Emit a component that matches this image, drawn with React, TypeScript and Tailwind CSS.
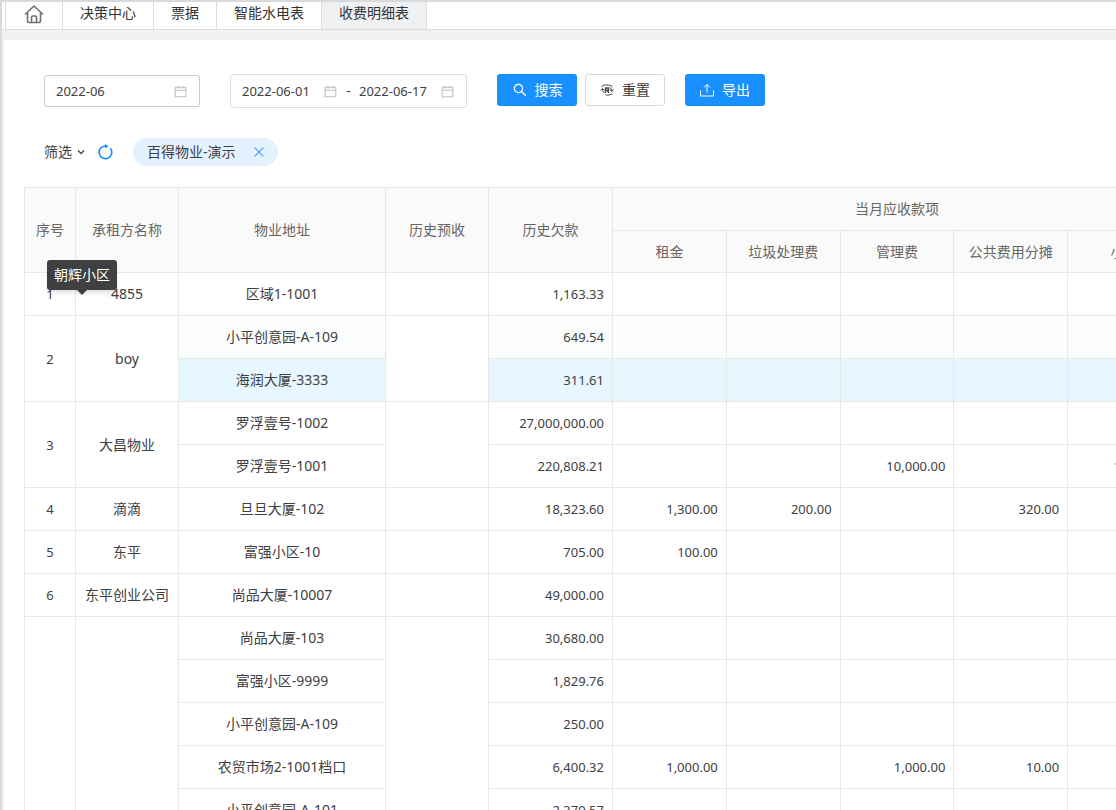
import { Fragment } from "react";
import { AiOutlineCalendar, AiOutlineClose, AiOutlineSearch } from "react-icons/ai";

interface Bill {
  address: string;
  debt: string;
  fees?: string[];
  state?: "hover" | "fading";
}

interface Tenant {
  no: string;
  name: string;
  bills: Bill[];
}

const tabs = ["决策中心", "票据", "智能水电表", "收费明细表"];

const feeColumns = ["租金", "垃圾处理费", "管理费", "公共费用分摊", "小计"];

const tenants: Tenant[] = [
  { no: "1", name: "4855", bills: [{ address: "区域1-1001", debt: "1,163.33" }] },
  {
    no: "2",
    name: "boy",
    bills: [
      { address: "小平创意园-A-109", debt: "649.54", state: "fading" },
      { address: "海润大厦-3333", debt: "311.61", state: "hover" },
    ],
  },
  {
    no: "3",
    name: "大昌物业",
    bills: [
      { address: "罗浮壹号-1002", debt: "27,000,000.00" },
      { address: "罗浮壹号-1001", debt: "220,808.21", fees: ["", "", "10,000.00", "", "10,000.00"] },
    ],
  },
  {
    no: "4",
    name: "滴滴",
    bills: [{ address: "旦旦大厦-102", debt: "18,323.60", fees: ["1,300.00", "200.00", "", "320.00", "1,820.00"] }],
  },
  {
    no: "5",
    name: "东平",
    bills: [{ address: "富强小区-10", debt: "705.00", fees: ["100.00", "", "", "", "100.00"] }],
  },
  { no: "6", name: "东平创业公司", bills: [{ address: "尚品大厦-10007", debt: "49,000.00" }] },
  {
    no: "",
    name: "",
    bills: [
      { address: "尚品大厦-103", debt: "30,680.00" },
      { address: "富强小区-9999", debt: "1,829.76" },
      { address: "小平创意园-A-109", debt: "250.00" },
      { address: "农贸市场2-1001档口", debt: "6,400.32", fees: ["1,000.00", "", "1,000.00", "10.00", "2,010.00"] },
      { address: "小平创意园-A-101", debt: "2,379.57" },
    ],
  },
];

const rowColor = {
  hover: "bg-[#e6f7ff]",
  fading: "bg-[#fcfefe]",
};

function HomeIcon() {
  return (
    <svg width="20" height="20" viewBox="0 0 20 20" fill="none" stroke="#707070" strokeWidth="1.6" strokeLinejoin="round" strokeLinecap="round">
      <path d="M1.5 10 10 2l8.5 8" />
      <path d="M3.5 9v8a1.5 1.5 0 0 0 1.5 1.5h10a1.5 1.5 0 0 0 1.5-1.5V9" />
      <path d="M7.500 18v-4.500a1.500 1.500 0 0 1 1.500-1.500h2a1.500 1.500 0 0 1 1.500 1.500V18" />
    </svg>
  );
}

function ResetIcon() {
  return (
    <svg width="14" height="14" viewBox="0 0 14 14" fill="none" stroke="#444">
      <path d="M1.500 4C3 2 5 1.800 7 2s4 .2 5.500 2M5.500 12c3 .4 5.500 0 7-2" />
      <path d="M.5 7.500 2.500 5.500 4 7.500M13.500 6.500 11.800 8.500 10.200 6.500" />
      <path d="M2.500 6c0 2 .8 3.200 2 4M11.800 8c0-1.500-.6-2.800-1.800-3.500" />
      <path d="M5.500 4.500v5.500M5.500 5h3v2.200h-3M7.200 7.200 9 10" strokeWidth="1.4" />
    </svg>
  );
}

function ExportIcon() {
  return (
    <svg width="14" height="14" viewBox="0 0 14 14" fill="none" stroke="currentColor">
      <path d="M7 9.500V1.500M4 4.500l3-3 3 3M.5 7.500v5.500h13V7.500" />
    </svg>
  );
}

function RefreshIcon() {
  return (
    <svg width="16" height="16" viewBox="0 0 16 16">
      <path d="M13.300 4.300A6.300 6.300 0 1 1 8.500 2" fill="none" stroke="#1890ff" strokeWidth="1.6" />
      <path d="M8 0v4.600L11.500 2.200z" fill="#1890ff" />
    </svg>
  );
}

function TabBar() {
  return (
    <nav className="flex h-[28px] border-b border-[#dcdcdc] bg-white pl-[3px]">
      <a href="#home" aria-label="首页" className="flex w-[58px] justify-center border-x border-[#dcdcdc] pt-[2px]">
        <HomeIcon />
      </a>
      {tabs.map((tab) => (
        <a
          key={tab}
          href={`#${tab}`}
          className={`border-r border-[#dcdcdc] px-[17px] text-[14px] leading-[22px] whitespace-nowrap text-[#333] ${
            tab === "收费明细表" ? "bg-[#eff0f2]" : ""
          }`}
        >
          {tab}
        </a>
      ))}
    </nav>
  );
}

function Toolbar() {
  return (
    <form className="flex items-start pl-5" onSubmit={(e) => e.preventDefault()}>
      <label className="mt-px flex h-8 w-[156px] items-center rounded-[3px] border border-[#c9c9c9] px-[11px]">
        <input aria-label="月份" defaultValue="2022-06" className="w-full min-w-0 flex-1 text-[13px] outline-none" />
        <AiOutlineCalendar size={15} className="text-[#bfbfbf]" />
      </label>

      <div className="ml-[30px] flex h-[34px] w-[237px] items-center rounded-[3px] border border-[#dedede] px-[11px]">
        <input aria-label="开始日期" defaultValue="2022-06-01" className="w-[81px] min-w-0 text-[13px] outline-none" />
        <AiOutlineCalendar size={15} className="shrink-0 text-[#bfbfbf]" />
        <span className="flex-1 text-center">-</span>
        <input aria-label="结束日期" defaultValue="2022-06-17" className="w-[81px] min-w-0 text-[13px] outline-none" />
        <AiOutlineCalendar size={15} className="shrink-0 text-[#bfbfbf]" />
      </div>

      <button type="submit" className="ml-[30px] flex h-8 w-20 items-center justify-center gap-[7px] rounded-[3px] bg-[#1890ff] text-white">
        <AiOutlineSearch size={16} />
        搜索
      </button>
      <button type="reset" className="ml-2 flex h-8 w-20 items-center justify-center gap-2 rounded-[3px] border border-[#d9d9d9] bg-white">
        <ResetIcon />
        重置
      </button>
      <button type="button" className="ml-5 flex h-8 w-20 items-center justify-center gap-2 rounded-[3px] bg-[#1890ff] text-white">
        <ExportIcon />
        导出
      </button>
    </form>
  );
}

function FilterBar() {
  return (
    <div className="mt-[30px] flex items-center pl-5">
      <button type="button" className="flex items-center gap-[5px]">
        筛选
        <svg width="8" height="8" viewBox="0 0 8 8" fill="none" stroke="#444" strokeWidth="1.3">
          <path d="m1 2.500 3 3 3-3" />
        </svg>
      </button>
      <button type="button" aria-label="刷新" className="ml-3">
        <RefreshIcon />
      </button>
      <span className="ml-5 flex h-7 items-center rounded-full bg-[#e4f1ff] pr-3 pl-[14px]">
        百得物业-演示
        <button type="button" aria-label="移除" className="ml-4 text-[#3a9dff]">
          <AiOutlineClose size={14} />
        </button>
      </span>
    </div>
  );
}

function ChargeTable() {
  const th = "border border-[#e8e8e8] p-0 font-normal whitespace-nowrap";
  const td = "border border-[#e8e8e8] p-0 text-center whitespace-nowrap";
  const money = "border border-[#e8e8e8] p-0 pr-2 text-right text-[13px]";

  return (
    <table className="w-full min-w-[1158px] table-fixed border-collapse">
      <colgroup>
        <col className="w-[51px]" />
        <col className="w-[103px]" />
        <col className="w-[207px]" />
        <col className="w-[103px]" />
        <col className="w-[124px]" />
        {feeColumns.map((name) => (
          <col key={name} />
        ))}
      </colgroup>
      <thead className="bg-[#fafafa] text-[#666]">
        <tr className="h-[43px]">
          <th rowSpan={2} className={th}>序号</th>
          <th rowSpan={2} className={th}>承租方名称</th>
          <th rowSpan={2} className={th}>物业地址</th>
          <th rowSpan={2} className={th}>历史预收</th>
          <th rowSpan={2} className={th}>历史欠款</th>
          <th colSpan={5} className={th}>当月应收款项</th>
        </tr>
        <tr className="h-[42px]">
          {feeColumns.map((name) => (
            <th key={name} className={th}>{name}</th>
          ))}
        </tr>
      </thead>
      <tbody>
        {tenants.map((tenant, t) => (
          <Fragment key={t}>
            {tenant.bills.map((bill, i) => {
              const color = bill.state ? rowColor[bill.state] : "";
              return (
                <tr key={bill.address} className="h-[43px]">
                  {i === 0 && (
                    <>
                      <td rowSpan={tenant.bills.length} className={`${td} text-[13px]`}>{tenant.no}</td>
                      <td rowSpan={tenant.bills.length} className={td}>{tenant.name}</td>
                    </>
                  )}
                  <td className={`${td} ${color}`}>{bill.address}</td>
                  {i === 0 && <td rowSpan={tenant.bills.length} className={td} />}
                  <td className={`${money} ${color}`}>{bill.debt}</td>
                  {feeColumns.map((name, f) => (
                    <td key={name} className={`${money} ${color}`}>{bill.fees?.[f]}</td>
                  ))}
                </tr>
              );
            })}
          </Fragment>
        ))}
      </tbody>
    </table>
  );
}

export default function App() {
  return (
    <div className="h-screen overflow-hidden border-t-2 border-l-2 border-[#d8d9da] bg-[#eff0f2] font-['Noto_Sans','Noto_Sans_CJK_SC',sans-serif] text-[14px] leading-[22px] text-[#404040]">
      <TabBar />
      <main className="mt-[10px] ml-[2px] bg-white pt-[34px] pl-5">
        <Toolbar />
        <FilterBar />
        <div className="relative mt-[21px] overflow-hidden">
          <ChargeTable />
          <div role="tooltip" className="absolute top-[73px] left-[23px] rounded-[3px] bg-[#404040] px-[7px] py-1 text-white shadow-md">
            朝辉小区
            <span className="absolute top-full left-1/2 -ml-[5px] border-x-[5px] border-t-[5px] border-x-transparent border-t-[#404040]" />
          </div>
        </div>
      </main>
    </div>
  );
}
